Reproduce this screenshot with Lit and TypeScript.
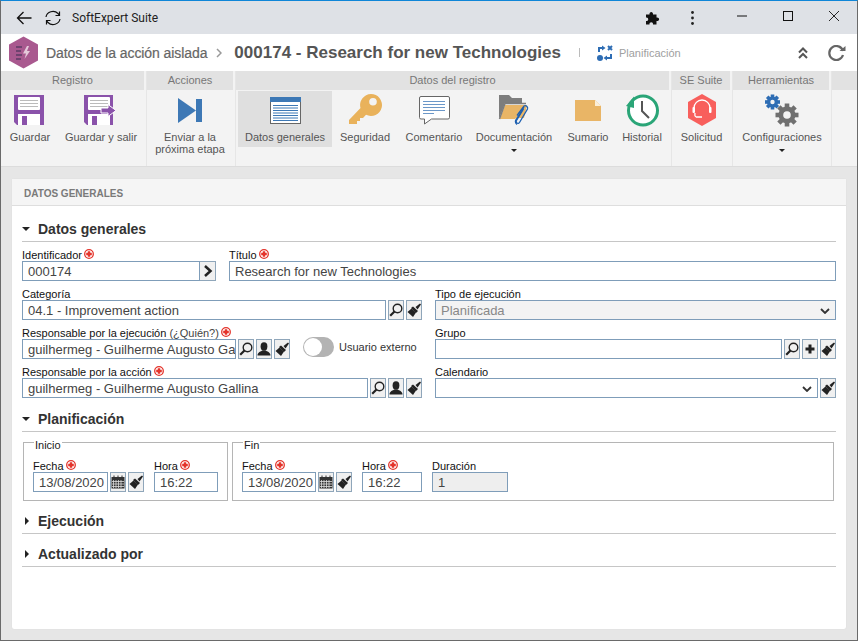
import { LitElement, html, css, svg } from "lit";
import { customElement } from "lit/decorators.js";

const floppy = (arrow: boolean) => svg`<svg class="fl" width="${arrow ? 32 : 30}" height="30" viewBox="0 0 ${arrow ? 32 : 30} 30">
  <path d="M0 0H${arrow ? 29 : 30}V30H3L0 27Z" fill="#8a52aa"/>
  <rect x="4" y="2" width="22" height="13" rx="1" fill="#fff"/>
  <path d="M6 5.500H24M6 8.500H24M6 11.500H24" stroke="#bbb" stroke-width="1"/>
  <rect x="4" y="19" width="22" height="11" fill="#fff"/>
  <rect x="8" y="21" width="5" height="9" fill="#8a52aa"/>
  ${arrow ? svg`<path d="M17 13H24V9.500L32 15.500L24 21.500V18H17Z" fill="#8a52aa" stroke="#fff" stroke-width="1"/>` : ""}
</svg>`;

const ICONS: Record<string, unknown> = {
  save: floppy(false),
  saveExit: floppy(true),
  next: svg`<svg width="24" height="25" viewBox="0 0 24 25"><path d="M0 0L18 12.500L0 25Z" fill="#3d78b5"/><rect x="18" y="1" width="6" height="23" fill="#3d78b5"/></svg>`,
  form: svg`<svg width="31" height="27" viewBox="0 0 31 27"><rect x="0.500" y="0.500" width="30" height="26" fill="#fff" stroke="#666" stroke-width="1"/><rect x="0" y="0" width="31" height="5" fill="#3d78b5"/><path d="M3 8.500H28M3 11H28M3 13.500H28M3 16H28M3 18.500H28M3 21H28M3 23.500H28" stroke="#3d78b5" stroke-width="1"/></svg>`,
  key: svg`<svg width="34" height="33" viewBox="0 0 34 33"><path fill-rule="evenodd" d="M23 0a11 11 0 1 1-5 20.800L15 24h-3v3H9v3H1v-4L12.500 14A11 11 0 0 1 23 0ZM25 4a3.800 3.800 0 1 0 0 7.600a3.800 3.800 0 0 0 0-7.600Z" fill="#e9b25b"/></svg>`,
  comment: svg`<svg width="31" height="29" viewBox="0 0 31 29"><path d="M2 .5H29a1.500 1.500 0 0 1 1.500 1.500V21.500a1.500 1.500 0 0 1-1.500 1.500H12.500L5.500 28V23H2A1.500 1.500 0 0 1 .5 21.500V2A1.500 1.500 0 0 1 2 .5Z" fill="#fff" stroke="#666" stroke-width="1"/><path d="M4 5.500H26M4 8.500H26M4 11.500H26M4 14.500H26M4 17.500H15" stroke="#6b97c8" stroke-width="1"/></svg>`,
  docs: svg`<svg width="32" height="32" viewBox="0 0 32 32"><path d="M1 1H11L14 4H24V9H7L1 25Z" fill="#7d7d7d"/><path d="M7 11H29L26 24H18L17 25H2Z" fill="#e9b566"/><path d="M1.500 25L7 9.500H28" fill="none" stroke="#7d7d7d" stroke-width="1.500"/><path d="M19 21.500L26 12A2.500 2.500 0 0 1 29.500 15L21.500 28.500A1.700 1.700 0 0 1 18.500 26.500L25.500 15" fill="none" stroke="#1c5fb0" stroke-width="1.300"/><path d="M19 30.500A4 4 0 0 1 18.500 25L26 13" fill="none" stroke="#1c5fb0" stroke-width="1.300"/></svg>`,
  summary: svg`<svg width="26" height="21" viewBox="0 0 26 21"><path d="M0 0H20L26 6V21H0Z" fill="#e9b566"/><path d="M20 0L26 6H20Z" fill="#fbeed8"/></svg>`,
  history: svg`<svg width="33" height="33" viewBox="0 0 33 33"><circle cx="17" cy="16.500" r="14.500" fill="#fff" stroke="#2aa577" stroke-width="3"/><path d="M0 11L8 1.500V13Z" fill="#2aa577" transform="translate(0 1)"/><path d="M16 7V17L23 24" fill="none" stroke="#555" stroke-width="2"/></svg>`,
  support: svg`<svg width="30" height="32" viewBox="0 0 30 32"><path d="M15 0L29 8V24L15 32L1 24V8Z" fill="#f85f5c"/><path d="M7 18V14A8 8 0 0 1 23 14V18" fill="none" stroke="#fff" stroke-width="1.300"/><rect x="5.500" y="13" width="2.500" height="6" rx="1" fill="#fff"/><rect x="22" y="13" width="2.500" height="6" rx="1" fill="#fff"/><path d="M9 23C7 22 8 20 8 19M9 23H15" fill="none" stroke="#fff" stroke-width="1.300"/></svg>`,
  gears: svg`<svg width="34" height="33" viewBox="0 0 34 33">
    <g transform="translate(7.500 8)" fill="#2e6db4">${[0,45,90,135].map(a=>svg`<rect x="-1.800" y="-7.500" width="3.600" height="15" transform="rotate(${a})"/>`)}<circle r="5.500"/><circle r="2.200" fill="#f3f3f3"/></g>
    <g transform="translate(22 21)" fill="#707070">${[0,45,90,135].map(a=>svg`<rect x="-2.300" y="-11.500" width="4.600" height="23" transform="rotate(${a})"/>`)}<circle r="8.500"/><circle r="3.800" fill="#f3f3f3"/></g>
  </svg>`,
};

const searchI = svg`<svg width="14" height="14" viewBox="0 0 14 14"><circle cx="8.500" cy="5.500" r="4.300" fill="none" stroke="#222" stroke-width="1.400"/><path d="M5.500 8.500L1.200 12.800" stroke="#222" stroke-width="2.200"/></svg>`;
const userI = svg`<svg width="14" height="14" viewBox="0 0 14 14"><ellipse cx="7" cy="4.500" rx="3.400" ry="4.200" fill="#222"/><path d="M0.500 13.500C0.500 10 4 9.500 5.500 8.500H8.500C10 9.500 13.500 10 13.500 13.500Z" fill="#222"/></svg>`;
const brushI = svg`<svg width="14" height="14" viewBox="0 0 14 14"><path d="M8.500 4L13 0.500L14 1.500L10.500 6.500Z" fill="#222"/><path d="M6 3.500L11 8L9 10L4 5Z" fill="#222"/><path d="M4.500 5.500L9 9.500L6 14L0.500 9Z" fill="#222"/></svg>`;
const plusI = svg`<svg width="12" height="12" viewBox="0 0 12 12"><path d="M6 1.500V10.500M1.500 6H10.500" stroke="#222" stroke-width="3"/></svg>`;
const calI = svg`<svg width="14" height="14" viewBox="0 0 14 14"><rect x="0.500" y="2" width="13" height="11.500" fill="#333"/><path d="M3 0.500V3M7 0.500V3M11 0.500V3" stroke="#333"/><path d="M2.500 5V13M5 5V13M7.500 5V13M10 5V13M1 6.500H13M1 9H13M1 11.500H13" stroke="#ddd" stroke-width="0.800"/></svg>`;
const arrowI = svg`<svg width="10" height="12" viewBox="0 0 10 12"><path d="M2 1L7.500 6L2 11" fill="none" stroke="#222" stroke-width="2.500"/></svg>`;
const chevron = svg`<svg width="10" height="6" viewBox="0 0 10 6"><path d="M1 1L5 5L9 1" fill="none" stroke="#333" stroke-width="1.800"/></svg>`;

@customElement("app-root")
export class AppRoot extends LitElement {
  static styles = css`
    :host { display: block; width: 858px; height: 641px; font-family: "Liberation Sans", Arial, sans-serif; }
    * { box-sizing: border-box; }
    .win { width: 858px; height: 641px; display: flex; flex-direction: column; background: #e6e6e6;
      border-top: 1px solid #0f86d8; border-left: 1px solid #6a6a6a; border-right: 1px solid #6a6a6a; border-bottom: 1px solid #6a6a6a; overflow: hidden; }
    .titlebar { height: 33px; flex: none; background: #dee1e6; display: flex; align-items: center; font: 12px Roboto, sans-serif; color: #222; }
    .tb-back { margin-left: 15px; display: flex; }
    .tb-reload { margin-left: 13px; display: flex; }
    .tb-title { margin-left: 11px; flex: 1; }
    .tb-r { display: flex; }
    .tb-r span { display: flex; align-items: center; justify-content: center; }
    .tb-r .wc { margin-bottom: 4px; }
    .head { height: 37px; flex: none; background: #fff; display: flex; align-items: center; }
    .logo { margin-left: 7px; display: flex; }
    .crumb { margin-left: 7px; font-size: 14px; color: #666; -webkit-text-stroke: .2px #666; letter-spacing: -.08px; }
    .sep { margin-left: 9px; display: flex; }
    .rec { margin-left: 12px; font-size: 17px; font-weight: 700; color: #555; }
    .bar { margin-left: 18px; width: 1px; height: 9px; background: #bbb; }
    .stage { margin-left: 17px; display: flex; align-items: center; gap: 6px; font-size: 11px; color: #a0a0a0; }
    .spacer { flex: 1; }
    .head-r { display: flex; margin-right: 8px; align-items: center; }
    .chv { margin-right: 20px; }
    .rld { margin-right: 3px; }
    .ribbon { height: 96px; flex: none; display: flex; background: #f3f3f3; border-bottom: 1px solid #dcdcdc; }
    .group { display: flex; flex-direction: column; border-right: 1px solid #e6e6e6; }
    .group.tail { flex: 1; border: none; }
    .group.tail .group-h { margin: 0; }
    .group-h { height: 19px; margin-right: 2px; background: #e2e2e2; color: #777; font-size: 11px; line-height: 19px; text-align: center; }
    .group-b { flex: 1; display: flex; padding-top: 1px; }
    .pad { width: 2px; }
    .tool { display: flex; flex-direction: column; align-items: center; height: 56px; font-size: 11px; color: #555; text-align: center; line-height: 12px; position: relative; padding: 0; flex: none; }
    .tool.on { background: #dfdfdf; }
    .ic { height: 33px; display: flex; align-items: center; justify-content: center; flex: none; margin-bottom: 7px; padding-top: 5px; }
    .fl { margin-left: -2px; }
    .tool .lb { white-space: nowrap; }
    .caret { width: 0; height: 0; border-left: 3px solid transparent; border-right: 3px solid transparent; border-top: 3px solid #222; margin-top: 6px; }
    .page { flex: 1; padding: 12px 11px 11px 11px; }
    .card { height: 450px; background: #fff; border-radius: 2px; box-shadow: 0 0 1px #ccc; display: flex; flex-direction: column; }
    .card-h { height: 27px; flex: none; background: #f5f5f5; border-bottom: 1px solid #dedede; font-size: 10px; font-weight: 700; color: #7a7a7a; line-height: 29px; padding-left: 12px; }
    .body { padding: 0 10px; }
    .sec { height: 33px; display: flex; align-items: flex-end; border-bottom: 1px solid #c6c6c6; padding-bottom: 4px; font-size: 14px; font-weight: 700; color: #333; }
    .sec.h36 { height: 36px; }
    .sec.h34 { height: 34px; }
    .sec.h32 { height: 32px; }
    .sec .ttl { margin-left: 8px; line-height: 16px; }
    .tri { width: 8px; display: flex; align-items: center; height: 16px; }
    .tri.dn::before { content: ""; border-left: 4px solid transparent; border-right: 4px solid transparent; border-top: 4px solid #222; }
    .tri.rt::before { content: ""; margin-left: 3px; border-top: 4px solid transparent; border-bottom: 4px solid transparent; border-left: 4px solid #222; }
    .row { display: flex; height: 39px; }
    .f { display: flex; flex-direction: column; }
    .f.horiz { flex-direction: row; }
    .f.id { width: 194px; }
    .f.title { width: 607px; margin-left: 13px; }
    .f.exec { width: 268px; flex: none; }
    .left { width: 400px; flex: none; }
    .right { width: 401px; margin-left: 13px; flex: none; }
    .lbl { height: 19px; display: flex; align-items: center; font-size: 11px; color: #111; padding-top: 7px; white-space: nowrap; }
    .lbl i { font-style: normal; color: #444; }
    .req { margin-left: 2px; margin-top: -3px; display: flex; }
    .ctl { display: flex; height: 20px; align-items: stretch; }
    .in { flex: 1; min-width: 0; height: 20px; border: 1px solid #7f9db9; background: #fff; font-size: 13px; line-height: 18px; padding: 1px 5px 0; color: #444; white-space: nowrap; overflow: hidden; display: flex; align-items: center; justify-content: space-between; }
    .in.start { justify-content: flex-start; }
    .in.end { justify-content: flex-end; }
    .in.dis { background: #f3f3f3; color: #888; }
    .in.dis2 { background: #eee; color: #444; }
    .btn { width: 16px; height: 20px; border: 1px solid #8fa6ba; background: #f0f0f0; margin-left: 2px; display: flex; align-items: center; justify-content: center; flex: none; }
    .btn.joined { margin-left: 0; border-left: none; }
    .toggle { width: 31px; height: 20px; border-radius: 10px; background: #b3b3b3; margin: 17px 0 0 13px; position: relative; flex: none; }
    .toggle::after { content: ""; position: absolute; left: 1px; top: 1px; width: 18px; height: 18px; border-radius: 50%; background: #fff; }
    .ext { font-size: 11px; color: #333; margin: 17px 0 0 5px; line-height: 20px; white-space: nowrap; }
    .sets { display: flex; margin: 10px 0 0 1px; gap: 4px; height: 60px; }
    fieldset { margin: 0; padding: 0 0 0 9px; border: 1px solid #b5b5b5; height: 59px; min-width: 0; display: flex; position: relative; }
    fieldset.a { width: 205px; }
    fieldset.b { width: 602px; }
    .leg { position: absolute; top: -4px; left: 10px; background: #fff; font-size: 11px; line-height: 12px; color: #222; padding: 0 1px; }
    .dg { display: flex; flex-direction: column; padding-top: 10px; }
    .dg + .dg { margin-left: 10px; }
    .dg .ctl { width: var(--w); }
  `;

  req() {
    return html`<span class="req"><svg width="10" height="10" viewBox="0 0 10 10"><circle cx="5" cy="5" r="4.300" fill="#fff" stroke="#e4342b" stroke-width="1.300"/><path d="M5 2.200V7.800M2.200 5H7.800" stroke="#e4342b" stroke-width="2.400"/></svg></span>`;
  }

  tool(label: unknown, icon: string, w: number, opts: { on?: boolean; caret?: boolean } = {}) {
    return html`<div class="tool ${opts.on ? "on" : ""}" style="width:${w}px"><div class="ic">${ICONS[icon]}</div><div class="lb">${label}</div>${opts.caret ? html`<div class="caret"></div>` : ""}</div>`;
  }

  group(title: string, w: number, tools: unknown) {
    return html`<div class="group" style="width:${w}px"><div class="group-h">${title}</div><div class="group-b">${tools}</div></div>`;
  }

  btns(list: unknown[]) {
    return list.map((i) => html`<div class="btn">${i}</div>`);
  }

  render() {
    return html`<div class="win">
      <div class="titlebar">
        <span class="tb-back"><svg width="16" height="14" viewBox="0 0 16 14"><path d="M15.500 7H1.500M7.500 1L1.500 7L7.500 13" fill="none" stroke="#111" stroke-width="1.300"/></svg></span>
        <span class="tb-reload"><svg width="16" height="16" viewBox="0 0 16 16"><path d="M1 7A7 6.500 0 0 1 13 3.500L14.500 5.500M14.500 1.500V5.500H10.500" fill="none" stroke="#111" stroke-width="1.200"/><path d="M15 9A7 6.500 0 0 1 3 12.500L1.500 10.500M1.500 14.500V10.500H5.500" fill="none" stroke="#111" stroke-width="1.200"/></svg></span>
        <span class="tb-title">SoftExpert Suite</span>
        <div class="tb-r">
          <span style="width:16px;margin-right:31px"><svg width="15" height="15" viewBox="0 0 15 15"><path d="M1 4.500H4.500C4 1 8.500 1 8 4.500H11.500V7.500C15 7 15 11.500 11.500 11V14.500H8C8.500 11.500 4 11.500 4.500 14.500H1V11C4 11.500 4 7 1 7.500Z" fill="#111"/></svg></span>
          <span style="width:3px;margin-right:43px"><svg width="3" height="14" viewBox="0 0 3 14"><circle cx="1.500" cy="1.500" r="1.400" fill="#222"/><circle cx="1.500" cy="7" r="1.400" fill="#222"/><circle cx="1.500" cy="12.500" r="1.400" fill="#222"/></svg></span>
          <span class="wc" style="width:10px;margin-right:36px"><svg width="10" height="2" viewBox="0 0 10 2"><path d="M0 1H10" stroke="#111"/></svg></span>
          <span class="wc" style="width:10px;margin-right:36px"><svg width="10" height="10" viewBox="0 0 10 10"><rect x=".5" y=".5" width="9" height="9" fill="none" stroke="#111"/></svg></span>
          <span class="wc" style="width:10px;margin-right:18px"><svg width="10" height="10" viewBox="0 0 10 10"><path d="M0 0L10 10M10 0L0 10" stroke="#111" stroke-width=".9"/></svg></span>
        </div>
      </div>
      <div class="head">
        <span class="logo"><svg width="31" height="33" viewBox="0 0 31 33"><path d="M15.500 .5L30 8.500V24.500L15.500 32.500L1 24.500V8.500Z" fill="#a9598f"/><path d="M8 11H14M8 15H13M8 19H14M8 23H13" stroke="#5b3b66" stroke-width="1.600"/><path d="M19 10L15 17.500H18L16.500 23L22 15H19L21 10Z" fill="#e5c9da"/></svg></span>
        <span class="crumb">Datos de la acción aislada</span>
        <span class="sep"><svg width="6" height="10" viewBox="0 0 6 10"><path d="M1 1L5 5L1 9" fill="none" stroke="#999" stroke-width="1.500"/></svg></span>
        <span class="rec">000174 - Research for new Technologies</span>
        <span class="bar"></span>
        <span class="stage"><svg width="16" height="16" viewBox="0 0 16 16"><g fill="none" stroke="#2e6db4" stroke-width="2"><path d="M2 7V3H5M11 1L15 5M15 1L11 5M14 9V13H10"/></g><path d="M5 0.500L8.500 3L5 5.500Z M10 10.500L6.500 13L10 15.500Z" fill="#2e6db4"/><circle cx="3" cy="13" r="3" fill="#2e6db4"/></svg>Planificación</span>
        <span class="spacer"></span>
        <div class="head-r">
          <svg class="chv" width="10" height="12" viewBox="0 0 10 12"><path d="M1 5.500L5 1.500L9 5.500M1 11L5 7L9 11" fill="none" stroke="#555" stroke-width="2"/></svg>
          <svg class="rld" width="18" height="16" viewBox="0 0 18 16"><path d="M15 6A7 7 0 1 0 15 10" fill="none" stroke="#666" stroke-width="2.200"/><path d="M11.500 6H17.500V1Z" fill="#666"/></svg>
        </div>
      </div>
      <div class="ribbon">
        ${this.group("Registro", 146, html`${this.tool("Guardar", "save", 58)}${this.tool("Guardar y salir", "saveExit", 84)}`)}
        ${this.group("Acciones", 89, this.tool(html`Enviar a la<br />próxima etapa`, "next", 86))}
        ${this.group("Datos del registro", 436, html`
          <div class="pad"></div>
          ${this.tool("Datos generales", "form", 94, { on: true })}
          ${this.tool("Seguridad", "key", 66)}
          ${this.tool("Comentario", "comment", 72)}
          ${this.tool("Documentación", "docs", 88, { caret: true })}
          ${this.tool("Sumario", "summary", 60)}
          ${this.tool("Historial", "history", 48)}
        `)}
        ${this.group("SE Suite", 61, this.tool("Solicitud", "support", 59))}
        ${this.group("Herramientas", 99, this.tool("Configuraciones", "gears", 98, { caret: true }))}
        <div class="group tail"><div class="group-h"></div></div>
      </div>
      <div class="page"><div class="card">
        <div class="card-h">DATOS GENERALES</div>
        <div class="body">
          <div class="sec h36"><span class="tri dn"></span><span class="ttl">Datos generales</span></div>
          <div class="row">
            <div class="f id"><div class="lbl">Identificador${this.req()}</div><div class="ctl"><div class="in">000174</div><div class="btn joined">${arrowI}</div></div></div>
            <div class="f title"><div class="lbl">Título${this.req()}</div><div class="ctl"><div class="in">Research for new Technologies</div></div></div>
          </div>
          <div class="row">
            <div class="f left"><div class="lbl">Categoría</div><div class="ctl"><div class="in">04.1 - Improvement action</div>${this.btns([searchI, brushI])}</div></div>
            <div class="f right"><div class="lbl">Tipo de ejecución</div><div class="ctl"><div class="in dis">Planificada${chevron}</div></div></div>
          </div>
          <div class="row">
            <div class="f left horiz">
              <div class="f exec"><div class="lbl">Responsable por la ejecución&nbsp;<i>(¿Quién?)</i>${this.req()}</div><div class="ctl"><div class="in start">guilhermeg - Guilherme Augusto Gallina</div>${this.btns([searchI, userI, brushI])}</div></div>
              <div class="toggle"></div><div class="ext">Usuario externo</div>
            </div>
            <div class="f right"><div class="lbl">Grupo</div><div class="ctl"><div class="in"></div>${this.btns([searchI, plusI, brushI])}</div></div>
          </div>
          <div class="row">
            <div class="f left"><div class="lbl">Responsable por la acción${this.req()}</div><div class="ctl"><div class="in">guilhermeg - Guilherme Augusto Gallina</div>${this.btns([searchI, userI, brushI])}</div></div>
            <div class="f right"><div class="lbl">Calendario</div><div class="ctl"><div class="in end">${chevron}</div>${this.btns([brushI])}</div></div>
          </div>
          <div class="sec h34"><span class="tri dn"></span><span class="ttl">Planificación</span></div>
          <div class="sets">
            <fieldset class="a"><span class="leg">Inicio</span>
              <div class="dg" style="--w:111px"><div class="lbl">Fecha${this.req()}</div><div class="ctl"><div class="in">13/08/2020</div>${this.btns([calI, brushI])}</div></div>
              <div class="dg" style="--w:64px"><div class="lbl">Hora${this.req()}</div><div class="ctl"><div class="in">16:22</div></div></div>
            </fieldset>
            <fieldset class="b"><span class="leg">Fin</span>
              <div class="dg" style="--w:110px"><div class="lbl">Fecha${this.req()}</div><div class="ctl"><div class="in">13/08/2020</div>${this.btns([calI, brushI])}</div></div>
              <div class="dg" style="--w:60px"><div class="lbl">Hora${this.req()}</div><div class="ctl"><div class="in">16:22</div></div></div>
              <div class="dg" style="--w:76px"><div class="lbl">Duración</div><div class="ctl"><div class="in dis2">1</div></div></div>
            </fieldset>
          </div>
          <div class="sec h32"><span class="tri rt"></span><span class="ttl">Ejecución</span></div>
          <div class="sec"><span class="tri rt"></span><span class="ttl">Actualizado por</span></div>
        </div>
      </div></div>
    </div>`;
  }
}
